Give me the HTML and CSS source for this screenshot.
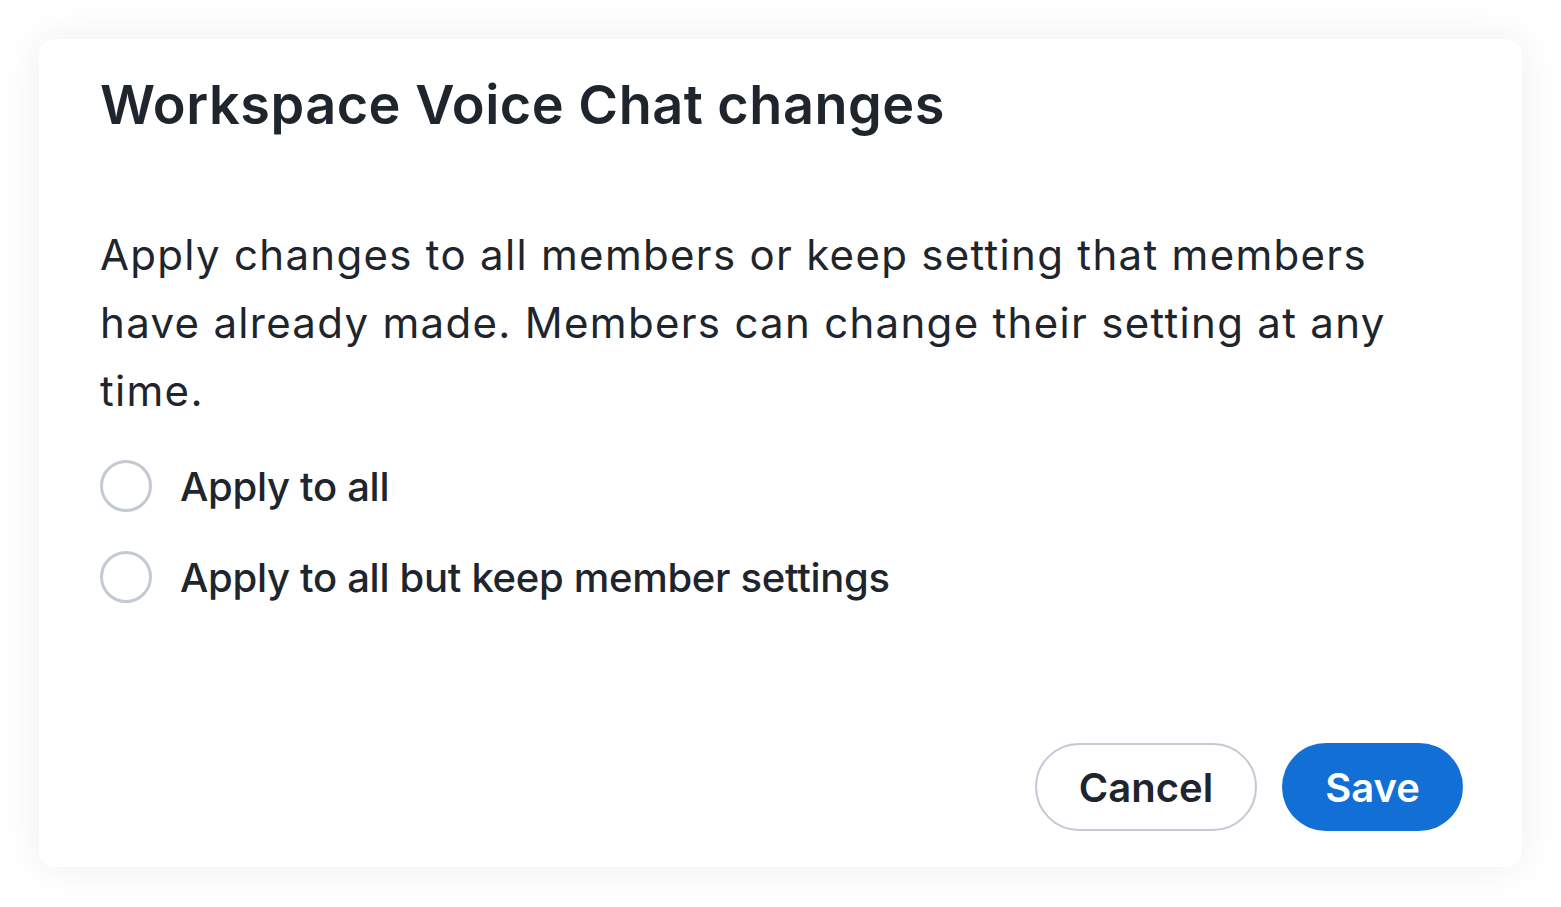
FILE: index.html
```html
<!DOCTYPE html>
<html lang="en">
<head>
    <meta charset="UTF-8">
    <meta name="viewport" content="width=device-width, initial-scale=1.0">
    <title>Workspace Voice Chat changes</title>
    <link rel="stylesheet" href="styles.css">
</head>
<body>
    <div class="dialog">
        <h1 class="dialog-title">Workspace Voice Chat changes</h1>
        <p class="dialog-text">Apply changes to all members or keep setting that members have already made. Members can change their setting at any time.</p>
        <div class="options">
            <label class="option">
                <span class="radio"></span>
                <span class="option-label">Apply to all</span>
            </label>
            <label class="option">
                <span class="radio"></span>
                <span class="option-label">Apply to all but keep member settings</span>
            </label>
        </div>
        <div class="actions">
            <button class="btn btn-secondary">Cancel</button>
            <button class="btn btn-primary">Save</button>
        </div>
    </div>
</body>
</html>
```

FILE: styles.css
```css
body {
    margin: 0;
    background-color: #fff;
    font-family: Inter, "Noto Sans", sans-serif;
    color: #1e252d;
}

.dialog {
    display: flex;
    flex-direction: column;
    box-sizing: border-box;
    width: 1483px;
    height: 828px;
    margin: 39px;
    padding: 30px 59px 36px 61px;
    background: #fff;
    border-radius: 16px;
    box-shadow: 0 0 40px rgba(0, 0, 0, 0.07);
}

.dialog-title {
    margin: 0;
    font-size: 54px;
    font-weight: 600;
    line-height: 72px;
    letter-spacing: 0.5px;
}

.dialog-text {
    margin: 80px 0 0;
    font-size: 42px;
    font-weight: 400;
    line-height: 68px;
    letter-spacing: 1.3px;
    max-width: 1320px;
}

.options {
    display: flex;
    flex-direction: column;
    gap: 39px;
    margin-top: 35px;
}

.option {
    display: flex;
    align-items: center;
    gap: 28px;
}

.radio {
    box-sizing: border-box;
    width: 52px;
    height: 52px;
    border: 3px solid #c3cad4;
    border-radius: 50%;
}

.option-label {
    font-size: 40px;
    font-weight: 500;
    letter-spacing: -0.3px;
}

.actions {
    display: flex;
    justify-content: flex-end;
    gap: 25px;
    margin-top: auto;
}

.btn {
    box-sizing: border-box;
    height: 88px;
    padding: 0;
    border-radius: 44px;
    font-family: inherit;
    font-size: 40px;
    font-weight: 600;
    cursor: pointer;
}

.btn-secondary {
    background: #fff;
    color: #1e252d;
    border: 2px solid #c3cad4;
    width: 222px;
}

.btn-primary {
    background: #126fd6;
    color: #fff;
    border: none;
    width: 181px;
}
```
